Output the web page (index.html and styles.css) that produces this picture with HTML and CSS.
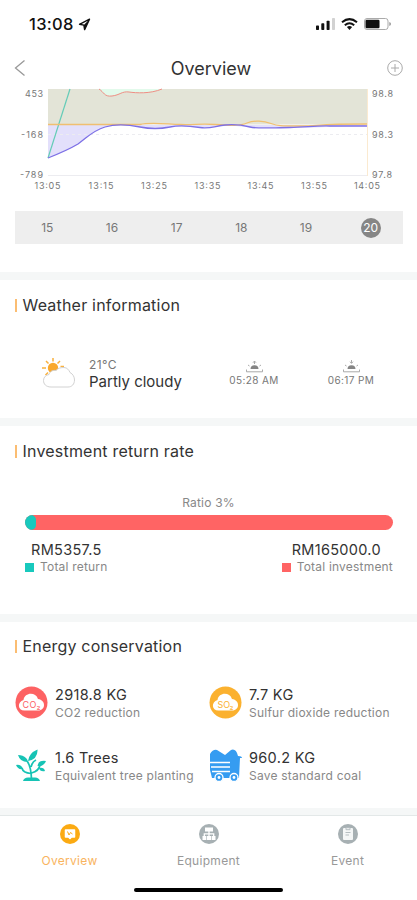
FILE: index.html
```
<!DOCTYPE html>
<html lang="en">
<head>
  <meta charset="UTF-8">
  <meta name="viewport" content="width=device-width, initial-scale=1">
  <title>Overview</title>
  <link rel="stylesheet" href="styles.css">
</head>
<body>

  <div class="app">
    <div class="status-bar">
      <span class="clock">13:08</span>
      <svg class="location" width="13" height="13" viewBox="0 0 13 13"><path d="M11.5 1.2 1.5 6.3l4.4.8.7 4.5z" fill="none" stroke="#111" stroke-width="1.4" stroke-linejoin="round"/><path d="M11.5 1.2 5.9 7.1l.7 4.5z" fill="#111"/></svg>
      <svg class="signals" width="76" height="14" viewBox="0 0 76 14">
        <g fill="#111">
          <rect x="0" y="8.5" width="3" height="4.5" rx=".7"/>
          <rect x="5.3" y="6.3" width="3" height="6.7" rx=".7"/>
          <rect x="10.6" y="3.7" width="3" height="9.3" rx=".7"/>
        </g>
        <rect x="16" y="1" width="3" height="12" rx=".7" fill="#d2d2d2"/>
        <g fill="none" stroke="#111" stroke-width="2">
          <path d="M26 5.2q7.5-6.2 15 0"/>
          <path d="M28.8 8.2q4.7-3.9 9.4 0"/>
        </g>
        <path d="M30.9 10q2.6-1.9 5.2 0l-2.6 3z" fill="#111"/>
        <rect x="48.5" y="1.5" width="23.5" height="11" rx="2.5" fill="none" stroke="#aaa"/>
        <rect x="49.5" y="2.8" width="14" height="8.4" rx="1.2" fill="#111"/>
        <path d="M73.3 5v4q1.7-.6 1.700-2t-1.700-2z" fill="#999"/>
      </svg>
    </div>

    <div class="nav">
      <svg width="12" height="18" viewBox="0 0 12 18" fill="none" stroke="#999" stroke-width="1.3"><path d="M10.500 1.500 1.500 9l9 7.500"/></svg>
      <h1>Overview</h1>
      <svg width="16" height="16" viewBox="0 0 16 16" fill="none" stroke="#aaa"><circle cx="8" cy="8" r="7.3"/><path d="M8 4v8M4 8h8"/></svg>
    </div>

    <div class="section power">
      <svg class="chart" width="417" height="112" viewBox="0 88 417 112">
        <rect x="48" y="89" width="319" height="35.5" fill="#e3e4d7"/>
        <path d="M48 125H367L364 126C340 126 315 128 290 128S258 127 250 127S235 125 225 126S210 127.5 200 127.5S180 125.5 170 126.5S150 129 140 127S115 124 105 127C92 131 88 137 78 144C68 150 58 154 48 158z" fill="#e3e0fb"/>
        <path d="M99 89c5 3 5 8 13 7s10-5 17-4 21 2 33-3z" fill="#e2faeb"/>
        <g stroke="#ececf0">
          <path d="M48 134.5h319" stroke-dasharray="3 3"/>
          <path d="M48 175.5h319"/>
        </g>
        <path d="M367.5 89v87" stroke="#fbead0"/>
        <g fill="none">
          <path d="M99 89c5 3 5 8 13 7s10-5 17-4 21 2 33-3" stroke="#ef8e84"/>
          <path d="M48 158 70 89" stroke="#65ccb8" stroke-width="1.2"/>
          <path d="M48 124.5H140C150 122 165 124 180 124.5S200 123.5 215 124.5S240 126 247 123S264 121 271 123.5S280 126 300 126S315 124 367 124" stroke="#f0bf70" stroke-width="1.3"/>
          <path d="M48 158C58 154 68 150 78 144C88 137 92 131 105 127C115 124 130 125 140 127S160 129 170 127S190 126 200 127.5S215 126 225 125S242 125 250 127S275 127.5 290 127.5S315 125.500 330 126H367" stroke="#7d70e6" stroke-width="1.3"/>
        </g>
        <g class="axis" text-anchor="end">
          <text x="43" y="97.3" textLength="18">453</text>
          <text x="43" y="137.8" textLength="22">-168</text>
          <text x="43" y="178.3" textLength="23">-789</text>
        </g>
        <g class="axis">
          <text x="372" y="97.3" textLength="21">98.8</text>
          <text x="372" y="137.8" textLength="21">98.3</text>
          <text x="372" y="178.3" textLength="20">97.8</text>
        </g>
        <g class="axis" text-anchor="middle">
          <text x="47.5" y="188.8" textLength="26">13:05</text>
          <text x="101" y="188.8" textLength="25">13:15</text>
          <text x="154" y="188.8" textLength="26">13:25</text>
          <text x="207.5" y="188.8" textLength="26">13:35</text>
          <text x="260.5" y="188.8" textLength="26">13:45</text>
          <text x="314" y="188.8" textLength="26">13:55</text>
          <text x="367" y="188.8" textLength="26">14:05</text>
        </g>
      </svg>
      <ul class="days">
        <li>15</li>
        <li>16</li>
        <li>17</li>
        <li>18</li>
        <li>19</li>
        <li><span class="current">20</span></li>
      </ul>
    </div>

    <div class="section weather">
      <h2>Weather information</h2>
      <div class="weather-row">
        <svg class="cloud" width="34" height="31" viewBox="0 0 34 31">
          <g stroke="#f9b13e" stroke-width="1.5">
            <path d="M11 0v3.500M4 3l2.500 2.500M0 10h4M3.500 17 6 14.500M18 3l-2.500 2.500M18.500 8.500H22"/>
          </g>
          <circle cx="11" cy="10" r="5.2" fill="#f9a82c"/>
          <path d="M9 29C4 29 1.500 26 1.500 22.500S4 17 7 16.500C8 13 11 12 14 12.500C16 10 19 9.500 22 9.500S27 12 28 14.500C31 16 32.500 19 32.500 22C32.500 26 30 29 26 29z" fill="#fff" stroke="#d2d2d2"/>
        </svg>
        <div class="temp">
          <p>21°C</p>
          <strong>Partly cloudy</strong>
        </div>
        <div class="sun">
          <svg width="17" height="13" viewBox="0 0 17 13"><path d="M4.500 9a4 3.800 0 0 1 8 0z" fill="#858585"/><path d="M2 5l1.500 1M15 5l-1.500 1M.500 9.500v2.300h16V9.500M7 2.700 8.500 1 10 2.700M8.500 1v3" fill="none" stroke="#aaa"/></svg>
          <span>05:28 AM</span>
        </div>
        <div class="sun">
          <svg width="17" height="13" viewBox="0 0 17 13"><path d="M4.500 9a4 3.800 0 0 1 8 0z" fill="#858585"/><path d="M2 5l1.500 1M15 5l-1.500 1M.500 9.500v2.300h16V9.500M7 1.700 8.500 3.400 10 1.700M8.500 0v3" fill="none" stroke="#aaa"/></svg>
          <span>06:17 PM</span>
        </div>
      </div>
    </div>

    <div class="section investment">
      <h2>Investment return rate</h2>
      <p class="ratio">Ratio 3%</p>
      <div class="bar"><div class="bar-fill" style="width: 3%"></div></div>
      <div class="totals">
        <div class="total">
          <strong>RM5357.5</strong>
          <p>Total return</p>
        </div>
        <div class="total invested">
          <strong>RM165000.0</strong>
          <p>Total investment</p>
        </div>
      </div>
    </div>

    <div class="section energy">
      <h2>Energy conservation</h2>
      <div class="savings">
        <div class="saving">
          <svg width="33" height="33" viewBox="0 0 33 33">
            <circle cx="16.5" cy="16.5" r="16" fill="#fd6263"/>
            <path d="M9.500 24.500c-7 0-7.500-8.500-1-10.500C9.500 6.500 20.500 5.500 23 13c8 1 8 11.500 0 11.500z" fill="#fff"/>
            <text class="gas" x="7.5" y="21.5" fill="#fd6263" textLength="18">CO₂</text>
          </svg>
          <div class="amount"><strong>2918.8 KG</strong><p>CO2 reduction</p></div>
        </div>
        <div class="saving">
          <svg width="33" height="33" viewBox="0 0 33 33">
            <circle cx="16.5" cy="16.5" r="16" fill="#fbb12f"/>
            <path d="M9.500 24.500c-7 0-7.500-8.500-1-10.500C9.500 6.500 20.500 5.500 23 13c8 1 8 11.500 0 11.500z" fill="#fff"/>
            <text class="gas" x="8.5" y="21.5" fill="#fbb12f" textLength="16">SO₂</text>
          </svg>
          <div class="amount"><strong>7.7 KG</strong><p>Sulfur dioxide reduction</p></div>
        </div>
        <div class="saving">
          <svg width="33" height="33" viewBox="0 0 33 33" fill="#17c3b5">
            <path d="M3 6q5 0 8 3 2 2 1.500 4Q5 13 3 6zM13 12Q14 4 22.500.500 23 10 13 12zM1 16q5-1 7 4-5 1-7-4zM31 12q-8-1-8.500 5 6 1 8.500-5zM24 19q5-1 6 3-5 1-6-3zM8 32q1-3.500 5-3.500h7q4 0 5 3.500z"/>
            <path d="M12 12q4 5 4.500 18M16 18q1-5 5-7M7 19q1 5 9 5.500M25 16q-1 6-8.500 8" fill="none" stroke="#17c3b5" stroke-width="1.7"/>
          </svg>
          <div class="amount"><strong>1.6 Trees</strong><p>Equivalent tree planting</p></div>
        </div>
        <div class="saving">
          <svg width="33" height="33" viewBox="0 0 33 33">
            <path d="M1 11V5q3-5 7-4l8 5 6-5q5-2 7 6 4 0 4 2h-2l-1 20H3l-2-8z" fill="#359cf1"/>
            <path d="M1 13.500h20M2 18h19M3 22.500h18" fill="none" stroke="#fff" stroke-width="1.7"/>
            <g fill="#359cf1" stroke="#fff" stroke-width="1.3"><circle cx="10" cy="28.500" r="4"/><circle cx="25" cy="28.500" r="4"/></g>
            <g fill="#fff"><circle cx="10" cy="28.500" r="1.400"/><circle cx="25" cy="28.500" r="1.400"/></g>
          </svg>
          <div class="amount"><strong>960.2 KG</strong><p>Save standard coal</p></div>
        </div>
      </div>
    </div>

    <div class="tabs">
      <div class="tab active">
        <svg width="20" height="20" viewBox="0 0 20 20"><circle cx="10" cy="10" r="10" fill="#fbaa12"/><path d="M5.500 6h9v7h-3L10 14.500 8.500 13h-3z" fill="#fff" stroke="#fff" stroke-width="1.5" stroke-linejoin="round"/><path d="M7.500 7.500 9 11l1.500-2.500L12.500 10" fill="none" stroke="#fbaa12"/></svg>
        <span>Overview</span>
      </div>
      <div class="tab">
        <svg width="20" height="20" viewBox="0 0 20 20"><circle cx="10" cy="10" r="10" fill="#a7b0b3"/><path d="M6 3.500h8v4H6zM3.500 12h3.900v4H3.500zM8 12h4v4H8zM12.600 12h3.900v4h-3.900z" fill="#fff"/><path d="M10 7v5.500M5.300 12.500V9.800h9.400v2.700" fill="none" stroke="#fff" stroke-width="1.3"/></svg>
        <span>Equipment</span>
      </div>
      <div class="tab">
        <svg width="20" height="20" viewBox="0 0 20 20"><circle cx="10" cy="10" r="10" fill="#a7b0b3"/><rect x="5" y="4" width="10" height="12" rx="1" fill="#f4f6f6"/><path d="M8 3.700h4v2H8zM7.500 8.500h5M7.500 11h3.500" fill="none" stroke="#b5bdc0"/></svg>
        <span>Event</span>
      </div>
    </div>
    <div class="home-bar"></div>
  </div>

</body>
</html>
```

FILE: styles.css
```
* {
  box-sizing: border-box;
}

body, h1, h2, p, ul {
  margin: 0;
  padding: 0;
}

body {
  background: #fff;
  font-family: Inter, "Liberation Sans", sans-serif;
  color: #333;
}

svg {
  display: block;
  flex: none;
}

.app {
  width: 417px;
  height: 900px;
  display: flex;
  flex-direction: column;
  overflow: hidden;
}

.status-bar {
  height: 48px;
  padding: 0 25px 0 29px;
  display: flex;
  align-items: center;
}

.clock {
  font-size: 16.5px;
  font-weight: 500;
  letter-spacing: .3px;
  color: #111;
  width: 49px;
}

.signals {
  margin-left: auto;
}

.nav {
  height: 40px;
  padding: 0 14px;
  display: flex;
  justify-content: space-between;
  align-items: center;
}

.nav h1 {
  font-size: 18px;
  font-weight: 400;
  padding-left: 9px;
}

.section {
  border-bottom: 8px solid #f5f7f7;
  flex: none;
}

.section h2 {
  font-size: 16px;
  font-weight: 400;
  line-height: 20px;
  letter-spacing: .2px;
  margin-left: 15px;
  display: flex;
  align-items: center;
}

.section h2:before {
  content: '';
  width: 2px;
  height: 13px;
  margin-right: 5.5px;
  background: #fbbd72;
}

.section strong {
  font-weight: 400;
}

.power {
  height: 192px;
}

.axis {
  font-size: 9px;
  fill: #777;
}

.days {
  margin: 11px 14px 0 15px;
  height: 33px;
  background: #eee;
  list-style: none;
  display: flex;
  align-items: center;
}

.days li {
  flex: 1;
  display: flex;
  justify-content: center;
  font-size: 12px;
  color: #777;
}

.current {
  width: 20px;
  height: 20px;
  border-radius: 50%;
  line-height: 20px;
  text-align: center;
  background: #868686;
  color: #fff;
}

.weather {
  height: 145.5px;
  padding-top: 15px;
}

.weather-row {
  display: flex;
  margin: 39px 0 0 42px;
}

.cloud {
  margin-top: 4px;
}

.temp {
  margin: 3px 0 0 13px;
  width: 134px;
}

.temp p {
  font-size: 12px;
  line-height: 16px;
  letter-spacing: .4px;
  color: #777;
}

.temp strong {
  display: block;
  font-size: 15px;
  line-height: 18px;
}

.sun {
  width: 97px;
  padding-right: 35px;
  margin-top: 6px;
  display: flex;
  flex-direction: column;
  align-items: center;
  font-size: 10px;
  line-height: 14px;
  letter-spacing: .4px;
  color: #777;
  white-space: nowrap;
}

.investment {
  height: 196px;
  padding-top: 15.5px;
}

.ratio {
  margin-top: 34px;
  font-size: 12px;
  line-height: 16px;
  letter-spacing: .2px;
  text-align: center;
  color: #888;
}

.bar {
  margin: 4px 24px 0 25px;
  height: 15px;
  border-radius: 8px;
  background: #ff6464;
  overflow: hidden;
}

.bar-fill {
  height: 15px;
  background: #18c9bd;
  border-radius: 5px;
}

.totals {
  margin: 11px 24px 0 25px;
  display: flex;
  justify-content: space-between;
}

.total strong {
  display: block;
  font-size: 14.5px;
  line-height: 18px;
  letter-spacing: .3px;
  margin-left: 6px;
}

.total p {
  display: flex;
  align-items: center;
  font-size: 12px;
  line-height: 16px;
  letter-spacing: .2px;
  color: #888;
}

.total p:before {
  content: '';
  width: 9px;
  height: 9px;
  margin-right: 6px;
  background: #18c9bd;
}

.total.invested strong {
  margin-left: 10px;
}

.invested p:before {
  background: #ff6464;
}

.energy {
  height: 193.5px;
  padding-top: 14.5px;
  border-bottom-width: 7px;
}

.savings {
  display: grid;
  grid-template-columns: 194px 1fr;
  row-gap: 27px;
  margin: 28px 0 0 15px;
}

.saving {
  display: flex;
  align-items: center;
  gap: 7px;
  height: 36px;
  white-space: nowrap;
}

.amount {
  padding-top: 2px;
}

.amount strong {
  display: block;
  font-size: 14.5px;
  line-height: 18px;
  letter-spacing: .3px;
}

.amount p {
  font-size: 12px;
  line-height: 17px;
  letter-spacing: .23px;
  color: #888;
}

.gas {
  font-size: 9px;
}

.tabs {
  height: 63px;
  padding-top: 8px;
  border-top: 1px solid #e3e8e8;
  display: flex;
  flex: none;
}

.tab {
  flex: 1;
  display: flex;
  flex-direction: column;
  align-items: center;
  gap: 9px;
  font-size: 12px;
  line-height: 16px;
  letter-spacing: .3px;
  color: #999;
}

.active {
  color: #f9b45e;
}

.home-bar {
  width: 149px;
  height: 4px;
  margin: 10px auto 0;
  border-radius: 2px;
  background: #000;
}
```
